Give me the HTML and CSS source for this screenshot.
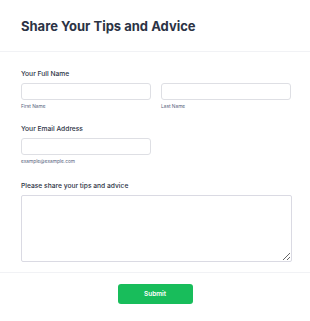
FILE: index.html
```html
<!DOCTYPE html>
<html lang="en">
<head>
    <meta charset="UTF-8">
    <meta name="viewport" content="width=device-width, initial-scale=1.0">
    <title>Share Your Tips and Advice</title>
    <link rel="stylesheet" href="styles.css">
</head>
<body>
    <div class="form-header">
        <h1>Share Your Tips and Advice</h1>
    </div>

    <form class="form-body">
        <!-- name -->
        <div class="field">
            <label class="field-label">Your Full Name</label>
            <div class="name-row">
                <div class="name-part">
                    <input type="text" class="text-input">
                    <span class="sub-label">First Name</span>
                </div>
                <div class="name-part">
                    <input type="text" class="text-input">
                    <span class="sub-label">Last Name</span>
                </div>
            </div>
        </div>

        <!-- email -->
        <div class="field">
            <label class="field-label">Your Email Address</label>
            <div class="name-part">
                <input type="email" class="text-input">
                <span class="sub-label">example@example.com</span>
            </div>
        </div>

        <!-- tips -->
        <div class="field tips-field">
            <label class="field-label">Please share your tips and advice</label>
            <textarea class="text-area"></textarea>
        </div>
    </form>

    <div class="form-footer">
        <button type="button" class="submit-button">Submit</button>
    </div>
</body>
</html>
```

FILE: styles.css
```css
body {
    font-family: Inter, "Noto Sans", sans-serif;
    background-color: #fff;
    color: #2c3345;
    margin: 0;
    padding: 0;
}
.form-header {
    padding: 15px 21px 14px;
    border-bottom: 1px solid #f1f2f5;
}
h1 {
    font-size: 13px;
    font-weight: 700;
    line-height: 22px;
    margin: 0;
    color: #2c3345;
}
.form-body {
    padding: 17px 18px 10px 21px;
    border-bottom: 1px solid #f1f2f5;
}
.field {
    margin-bottom: 15px;
}
.field:last-child {
    margin-bottom: 0;
}
.tips-field {
    padding-top: 2px;
}
.field-label {
    display: block;
    font-size: 6.7px;
    font-weight: 500;
    line-height: 10px;
    margin-bottom: 4px;
    color: #2c3345;
}
.name-row {
    display: flex;
    gap: 10px;
}
.name-part {
    display: flex;
    flex-direction: column;
    width: 130px;
}
.text-input {
    box-sizing: border-box;
    width: 100%;
    height: 17px;
    margin: 0;
    border: 1px solid #dedfe4;
    border-radius: 3px;
    background: #fff;
}
.sub-label {
    font-size: 4.8px;
    line-height: 6px;
    margin-top: 3px;
    color: #57647e;
}
.text-area {
    display: block;
    box-sizing: border-box;
    width: 271px;
    height: 67px;
    margin: 0;
    border: 1px solid #dadae3;
    border-radius: 2px;
    resize: vertical;
}
.form-footer {
    display: flex;
    justify-content: center;
    padding: 11px 0;
}
.submit-button {
    width: 75px;
    height: 20px;
    border: none;
    border-radius: 3px;
    background-color: #18bd5b;
    color: #fff;
    font-family: Inter, sans-serif;
    font-size: 6.5px;
    font-weight: 600;
    cursor: pointer;
}
```
